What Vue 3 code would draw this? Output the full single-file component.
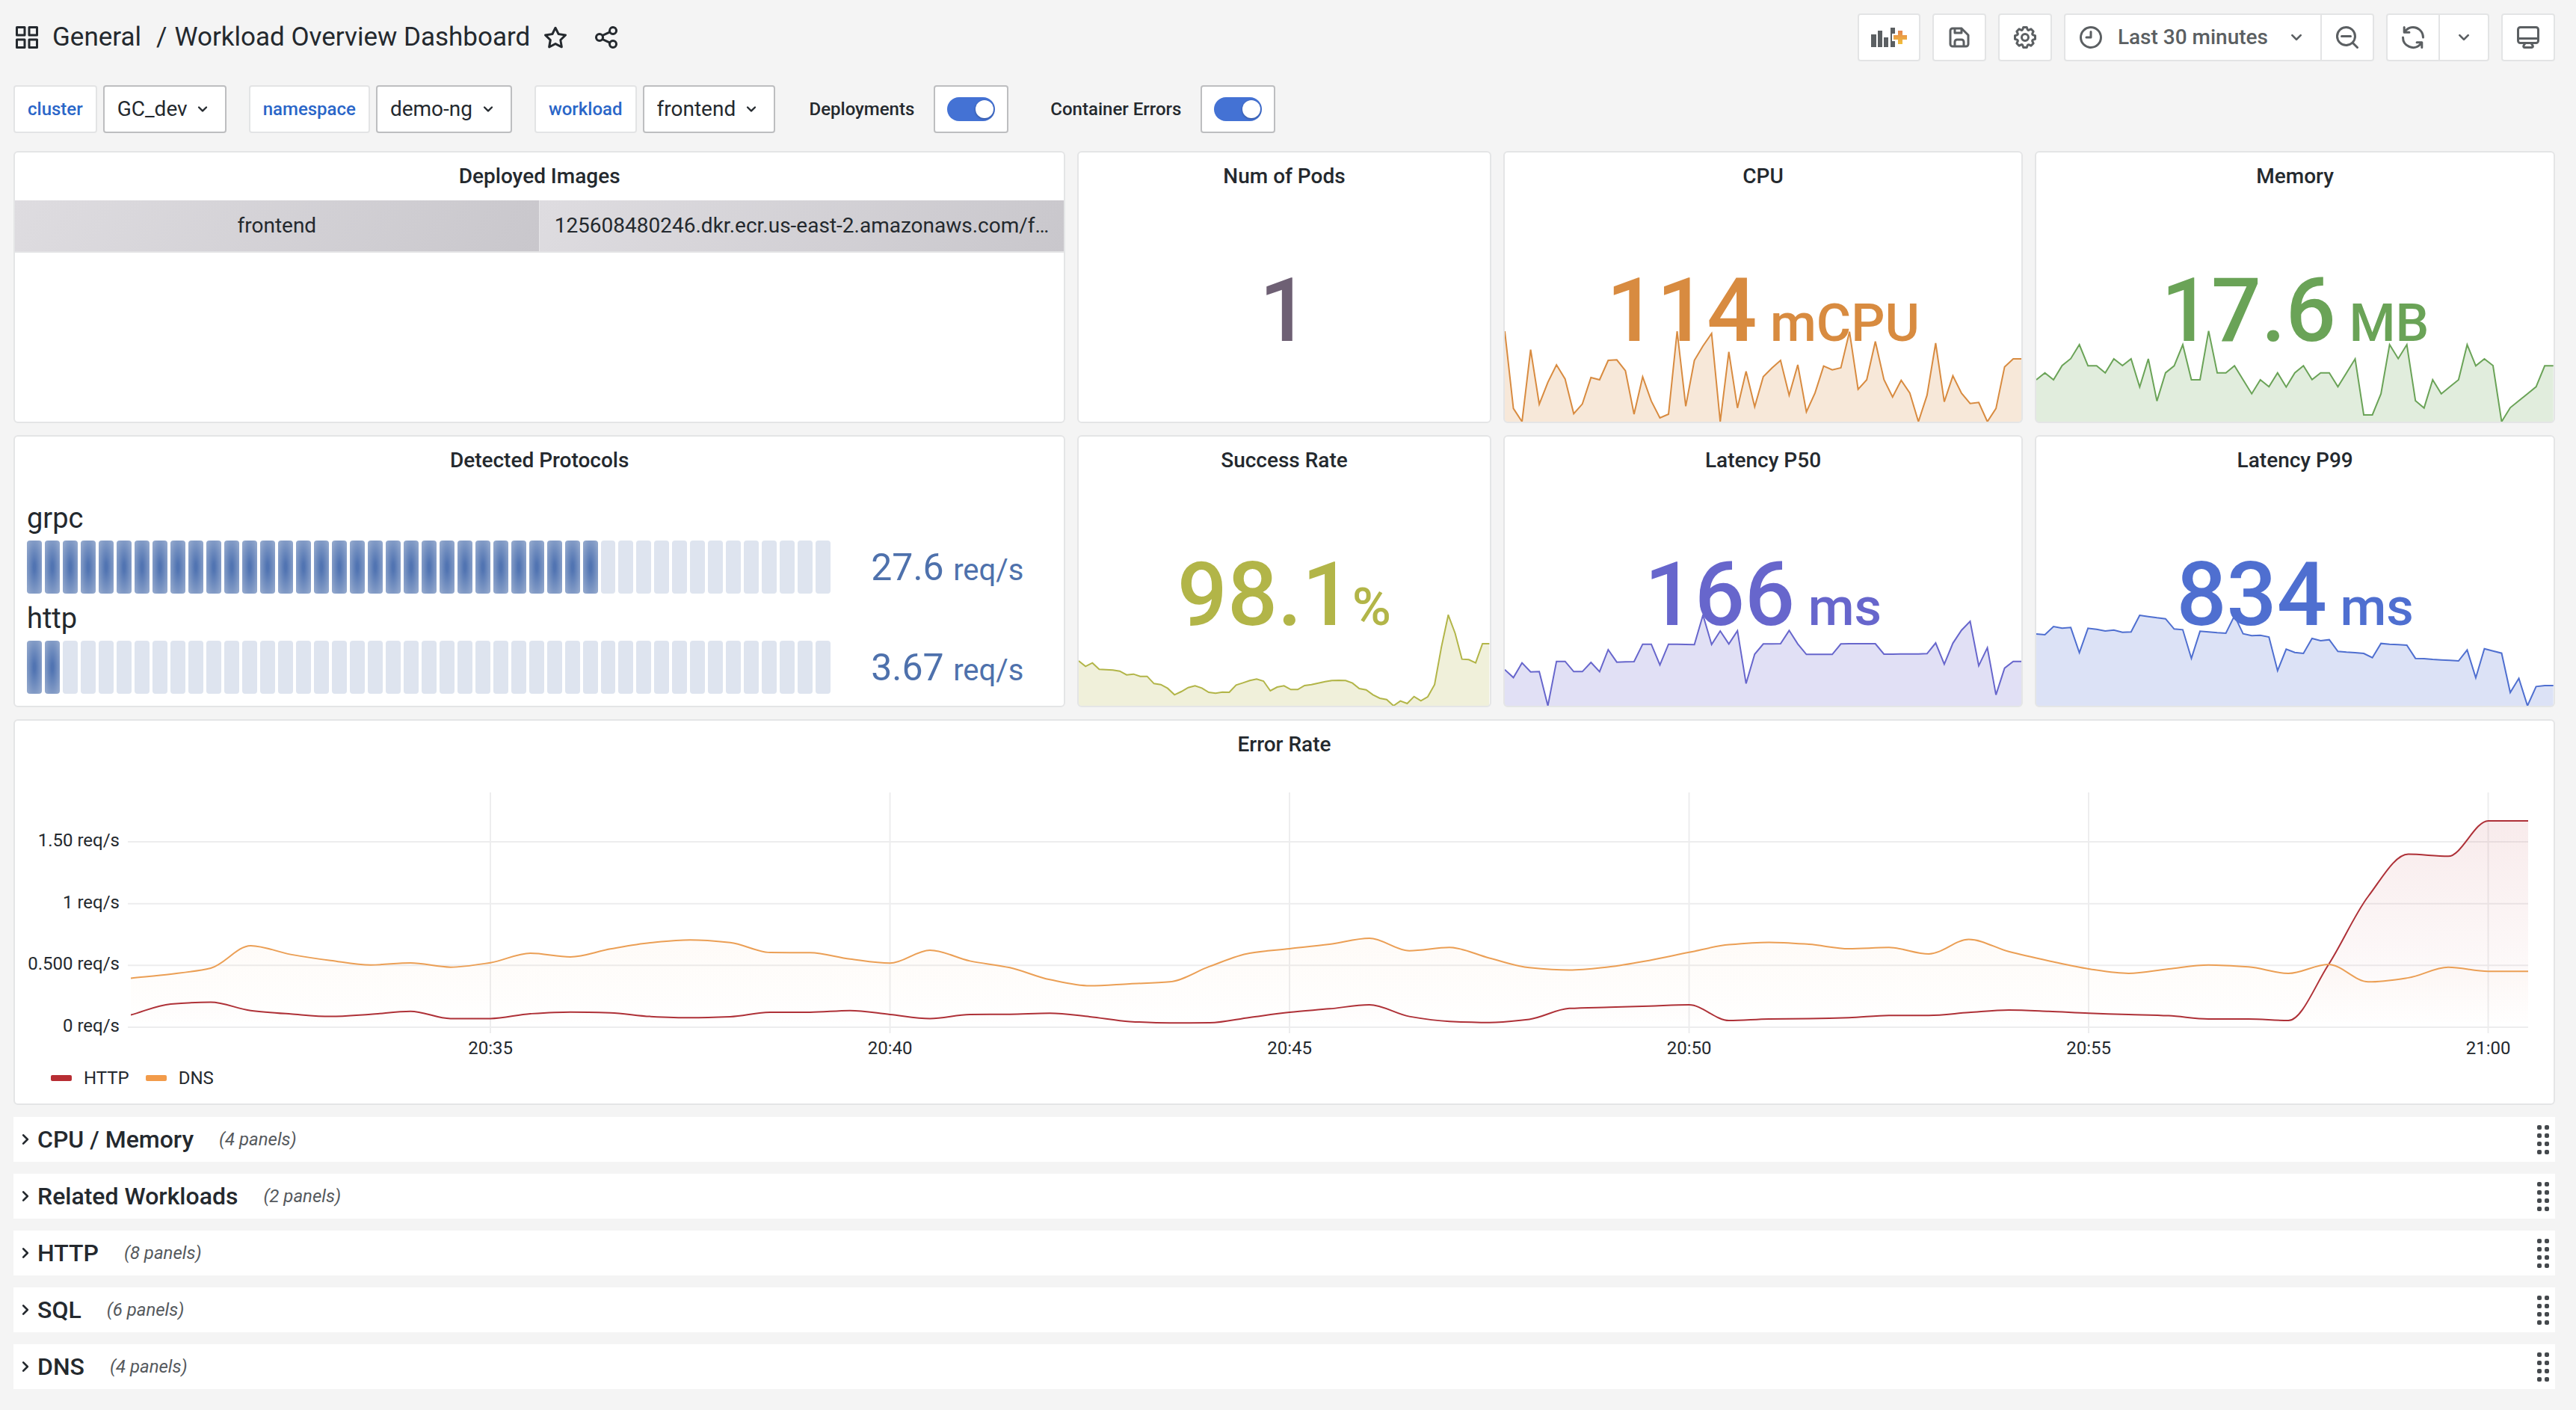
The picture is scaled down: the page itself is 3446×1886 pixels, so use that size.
<script setup>
import { ref } from 'vue'

const icons = {
  apps: 'M10,13H3a1,1,0,0,0-1,1v7a1,1,0,0,0,1,1h7a1,1,0,0,0,1-1V14A1,1,0,0,0,10,13ZM9,20H4V15H9ZM21,2H14a1,1,0,0,0-1,1v7a1,1,0,0,0,1,1h7a1,1,0,0,0,1-1V3A1,1,0,0,0,21,2ZM20,9H15V4h5Zm1,4H14a1,1,0,0,0-1,1v7a1,1,0,0,0,1,1h7a1,1,0,0,0,1-1V14A1,1,0,0,0,21,13Zm-1,7H15V15h5ZM10,2H3A1,1,0,0,0,2,3v7a1,1,0,0,0,1,1h7a1,1,0,0,0,1-1V3A1,1,0,0,0,10,2ZM9,9H4V4H9Z',
  star: 'M22,9.67A1,1,0,0,0,21.14,9l-5.69-.83L12.9,3a1,1,0,0,0-1.8,0L8.55,8.16,2.86,9a1,1,0,0,0-.81.68,1,1,0,0,0,.25,1l4.13,4-1,5.68A1,1,0,0,0,6.9,21.44L12,18.77l5.1,2.67a.93.93,0,0,0,.46.12,1,1,0,0,0,.59-.19,1,1,0,0,0,.4-1l-1-5.68,4.13-4A1,1,0,0,0,22,9.67Zm-6.15,4a1,1,0,0,0-.29.88l.72,4.2-3.76-2a1.06,1.06,0,0,0-.94,0l-3.76,2,.72-4.2a1,1,0,0,0-.29-.88l-3-3,4.21-.61a1,1,0,0,0,.76-.55L12,5.7l1.88,3.82a1,1,0,0,0,.76.55l4.21.61Z',
  share: 'M18,14a4,4,0,0,0-3.08,1.48l-5.1-2.35a3.64,3.64,0,0,0,0-2.26l5.1-2.35A4,4,0,1,0,14,6a4.17,4.17,0,0,0,.07.71L8.79,9.14a4,4,0,1,0,0,5.72l5.28,2.43A4.17,4.17,0,0,0,14,18a4,4,0,1,0,4-4ZM18,4a2,2,0,1,1-2,2A2,2,0,0,1,18,4ZM6,14a2,2,0,1,1,2-2A2,2,0,0,1,6,14Zm12,6a2,2,0,1,1,2-2A2,2,0,0,1,18,20Z',
  save: 'M20.71,9.29l-6-6a1,1,0,0,0-.32-.21A1.09,1.09,0,0,0,14,3H6A3,3,0,0,0,3,6V18a3,3,0,0,0,3,3H18a3,3,0,0,0,3-3V10A1,1,0,0,0,20.71,9.29ZM9,5h4V7H9Zm6,14H9V16a1,1,0,0,1,1-1h4a1,1,0,0,1,1,1Zm4-1a1,1,0,0,1-1,1H17V16a3,3,0,0,0-3-3H10a3,3,0,0,0-3,3v3H6a1,1,0,0,1-1-1V6A1,1,0,0,1,6,5H7V8A1,1,0,0,0,8,9h6a1,1,0,0,0,1-1V6.41l4,4Z',
  cog: 'M21.32,9.55l-1.89-.63.89-1.78A1,1,0,0,0,20.13,6L18,3.87a1,1,0,0,0-1.15-.19l-1.78.89-.63-1.89A1,1,0,0,0,13.5,2h-3a1,1,0,0,0-.95.68L8.92,4.57,7.14,3.68A1,1,0,0,0,6,3.87L3.87,6a1,1,0,0,0-.19,1.15l.89,1.78-1.89.63A1,1,0,0,0,2,10.5v3a1,1,0,0,0,.68.95l1.89.63-.89,1.78A1,1,0,0,0,3.87,18L6,20.13a1,1,0,0,0,1.15.19l1.78-.89.63,1.89a1,1,0,0,0,.95.68h3a1,1,0,0,0,.95-.68l.63-1.89,1.78.89A1,1,0,0,0,18,20.13L20.13,18a1,1,0,0,0,.19-1.15l-.89-1.78,1.89-.63A1,1,0,0,0,22,13.5v-3A1,1,0,0,0,21.32,9.55ZM20,12.78l-1.2.4A2,2,0,0,0,17.64,16l.57,1.14-1.1,1.1L16,17.64a2,2,0,0,0-2.79,1.16l-.4,1.2H11.22l-.4-1.2A2,2,0,0,0,8,17.64l-1.14.57-1.1-1.1L6.36,16A2,2,0,0,0,5.2,13.18L4,12.78V11.22l1.2-.4A2,2,0,0,0,6.36,8L5.79,6.89l1.1-1.1L8,6.36A2,2,0,0,0,10.82,5.2l.4-1.2h1.56l.4,1.2A2,2,0,0,0,16,6.36l1.14-.57,1.1,1.1L17.64,8a2,2,0,0,0,1.16,2.79l1.2.4ZM12,8a4,4,0,1,0,4,4A4,4,0,0,0,12,8Zm0,6a2,2,0,1,1,2-2A2,2,0,0,1,12,14Z',
  clock: 'M12,2A10,10,0,1,0,22,12,10,10,0,0,0,12,2Zm0,18a8,8,0,1,1,8-8A8,8,0,0,1,12,20ZM12,6a1,1,0,0,0-1,1v4H8a1,1,0,0,0,0,2h4a1,1,0,0,0,1-1V7A1,1,0,0,0,12,6Z',
  zoomOut: 'M21.71,20.29,18,16.61A9,9,0,1,0,16.61,18l3.68,3.68a1,1,0,0,0,1.42,0A1,1,0,0,0,21.71,20.29ZM11,18a7,7,0,1,1,7-7A7,7,0,0,1,11,18Zm4-8H7a1,1,0,0,0,0,2h8a1,1,0,0,0,0-2Z',
  sync: 'M19.91,15.51H15.38a1,1,0,0,0,0,2h2.4A8,8,0,0,1,4,12a1,1,0,1,0-2,0,10,10,0,0,0,16.88,7.23V21a1,1,0,0,0,2,0V16.5A1,1,0,0,0,19.91,15.51ZM12,2A10,10,0,0,0,5.12,4.77V3a1,1,0,0,0-2,0V7.5a1,1,0,0,0,1,1h4.5a1,1,0,0,0,0-2H6.22A8,8,0,0,1,20,12a1,1,0,0,0,2,0A10,10,0,0,0,12,2Z',
  monitor: 'M19,2H5A3,3,0,0,0,2,5V15a3,3,0,0,0,3,3H7.64l-.58,1a2,2,0,0,0,0,2,2,2,0,0,0,1.75,1h6.46A2,2,0,0,0,17,21a2,2,0,0,0,0-2l-.59-1H19a3,3,0,0,0,3-3V5A3,3,0,0,0,19,2ZM8.77,20,10,18H14l1.2,2ZM20,15a1,1,0,0,1-1,1H5a1,1,0,0,1-1-1V14H20Zm0-3H4V5A1,1,0,0,1,5,4H19a1,1,0,0,1,1,1Z',
  down: 'M17,9.17a1,1,0,0,0-1.41,0L12,12.71,8.46,9.17a1,1,0,0,0-1.41,0,1,1,0,0,0,0,1.42l4.24,4.24a1,1,0,0,0,1.42,0L17,10.59A1,1,0,0,0,17,9.17Z',
  right: 'M14.83,11.29,10.59,7.05a1,1,0,0,0-1.42,0,1,1,0,0,0,0,1.41L12.71,12,9.17,15.54a1,1,0,0,0,0,1.41,1,1,0,0,0,.71.29,1,1,0,0,0,.71-.29l4.24-4.24A1,1,0,0,0,14.83,11.29Z',
}

const variables = [
  { name: 'cluster', value: 'GC_dev' },
  { name: 'namespace', value: 'demo-ng' },
  { name: 'workload', value: 'frontend' },
]

const annotations = ref([
  { id: 'deployments', label: 'Deployments', on: true },
  { id: 'container-errors', label: 'Container Errors', on: true },
])

const SEGMENTS = 45
const protocols = [
  { name: 'grpc', value: '27.6', unit: 'req/s', lit: 32 },
  { name: 'http', value: '3.67', unit: 'req/s', lit: 2 },
]

// Spark points are depths below the top of the trend; `floor` is the lowest one.
const cpu = [128, 438, 491, 202, 421, 333, 263, 320, 459, 420, 314, 323, 245, 243, 287, 461, 311, 408, 476, 461, 128, 429, 245, 187, 137, 491, 211, 436, 289, 431, 310, 276, 245, 385, 263, 452, 376, 268, 283, 275, 130, 361, 323, 169, 322, 392, 325, 376, 491, 385, 176, 411, 307, 377, 418, 414, 491, 438, 271, 239, 239]
const memory = [323, 295, 323, 266, 238, 182, 267, 267, 295, 239, 266, 239, 352, 239, 408, 295, 267, 182, 323, 323, 127, 295, 295, 267, 323, 379, 323, 351, 295, 352, 295, 267, 322, 295, 295, 351, 295, 239, 464, 464, 379, 182, 238, 182, 407, 436, 323, 379, 351, 323, 182, 267, 239, 266, 491, 435, 407, 379, 351, 267, 267]
const success = [311, 333, 319, 345, 346, 348, 352, 367, 364, 373, 373, 402, 406, 421, 447, 434, 418, 411, 420, 437, 441, 436, 437, 408, 399, 390, 384, 392, 431, 416, 411, 426, 426, 410, 406, 400, 394, 390, 389, 390, 400, 422, 427, 447, 461, 466, 491, 472, 482, 454, 471, 455, 406, 255, 127, 200, 304, 306, 319, 242, 242]
const p50 = [346, 378, 319, 355, 354, 491, 313, 313, 354, 354, 317, 354, 266, 316, 315, 314, 244, 244, 327, 244, 244, 245, 246, 127, 245, 191, 243, 190, 402, 284, 243, 243, 242, 189, 243, 285, 285, 285, 285, 243, 242, 242, 242, 242, 284, 284, 283, 283, 283, 282, 239, 324, 240, 188, 152, 330, 258, 447, 340, 313, 313]
const p99 = [323, 326, 293, 300, 297, 398, 300, 304, 311, 307, 316, 315, 248, 253, 258, 262, 303, 306, 421, 312, 315, 318, 320, 250, 322, 330, 328, 335, 470, 384, 397, 401, 341, 350, 346, 393, 396, 398, 401, 418, 361, 364, 366, 368, 421, 422, 425, 427, 429, 431, 387, 499, 382, 391, 400, 558, 501, 611, 534, 530, 530]

const SPARK_RANGE = 366
function spark(points, floor) {
  return points.map((p, i) => `${i},${SPARK_RANGE - (floor - p)}`).join(' ')
}

const topStats = [
  { title: 'Num of Pods', value: '1', unit: '', tone: 'plum', span: 4 },
  { title: 'CPU', value: '114', unit: ' mCPU', tone: 'orange', span: 5, line: spark(cpu, 491) },
  { title: 'Memory', value: '17.6', unit: ' MB', tone: 'green', span: 5, line: spark(memory, 491) },
]
const bottomStats = [
  { title: 'Success Rate', value: '98.1', unit: '%', tone: 'olive', span: 4, line: spark(success, 491) },
  { title: 'Latency P50', value: '166', unit: ' ms', tone: 'violet', span: 5, line: spark(p50, 491) },
  { title: 'Latency P99', value: '834', unit: ' ms', tone: 'blue', span: 5, line: spark(p99, 611) },
]

const dns = [0.397, 0.43, 0.478, 0.66, 0.589, 0.54, 0.504, 0.52, 0.486, 0.522, 0.599, 0.569, 0.633, 0.683, 0.706, 0.685, 0.605, 0.603, 0.552, 0.518, 0.623, 0.536, 0.482, 0.385, 0.335, 0.351, 0.367, 0.492, 0.599, 0.635, 0.671, 0.72, 0.619, 0.645, 0.56, 0.482, 0.462, 0.488, 0.54, 0.606, 0.668, 0.687, 0.671, 0.635, 0.645, 0.593, 0.71, 0.612, 0.537, 0.472, 0.436, 0.472, 0.504, 0.488, 0.436, 0.508, 0.367, 0.4, 0.485, 0.452, 0.452]
const http = [0.099, 0.188, 0.202, 0.135, 0.107, 0.087, 0.105, 0.129, 0.07, 0.07, 0.109, 0.123, 0.117, 0.087, 0.077, 0.085, 0.121, 0.121, 0.135, 0.103, 0.07, 0.103, 0.105, 0.113, 0.085, 0.046, 0.035, 0.036, 0.079, 0.121, 0.149, 0.181, 0.087, 0.047, 0.038, 0.064, 0.152, 0.162, 0.171, 0.181, 0.054, 0.067, 0.07, 0.077, 0.096, 0.096, 0.119, 0.139, 0.129, 0.113, 0.103, 0.093, 0.067, 0.067, 0.054, 0.505, 1.06, 1.4, 1.383, 1.67, 1.67]

const PLOT = 314
const yOf = (v) => PLOT - (v * 496) / 3

// Monotone cubic interpolation, so the curve never overshoots its points.
function smooth(values) {
  const y = values.map(yOf)
  const n = y.length
  const d = y.slice(1).map((v, i) => v - y[i])
  const m = y.map((_, i) => {
    if (i === 0) return d[0]
    if (i === n - 1) return d[n - 2]
    const a = d[i - 1]
    const b = d[i]
    return a * b <= 0 ? 0 : (2 * a * b) / (a + b)
  })
  let path = `M0,${y[0].toFixed(1)}`
  for (let i = 0; i < n - 1; i++) {
    const c1 = (y[i] + m[i] / 3).toFixed(2)
    const c2 = (y[i + 1] - m[i + 1] / 3).toFixed(2)
    path += `C${(i + 1 / 3).toFixed(3)},${c1} ${(i + 2 / 3).toFixed(3)},${c2} ${i + 1},${y[i + 1].toFixed(2)}`
  }
  return path
}

const series = [
  { name: 'HTTP', key: 'http', d: smooth(http) },
  { name: 'DNS', key: 'dns', d: smooth(dns) },
]
const yTicks = [
  { v: 1.5, label: '1.50 req/s' },
  { v: 1, label: '1 req/s' },
  { v: 0.5, label: '0.500 req/s' },
  { v: 0, label: '0 req/s' },
]
const xTicks = ['20:35', '20:40', '20:45', '20:50', '20:55', '21:00'].map((label, i) => ({
  label,
  x: `${((9 + i * 10) * 100) / 60}%`,
}))

const rows = [
  { title: 'CPU / Memory', count: 4 },
  { title: 'Related Workloads', count: 2 },
  { title: 'HTTP', count: 8 },
  { title: 'SQL', count: 6 },
  { title: 'DNS', count: 4 },
]
</script>

<template>
  <div class="page">
    <header class="toolbar">
      <svg class="icon lg" viewBox="0 0 24 24" aria-hidden="true"><path :d="icons.apps" /></svg>
      <h1 class="crumbs">
        <a href="#general">General</a>
        <span class="slash">/</span>
        <a href="#dashboard">Workload Overview Dashboard</a>
      </h1>
      <button class="bare" type="button" aria-label="Mark as favorite">
        <svg class="icon lg" viewBox="0 0 24 24"><path :d="icons.star" /></svg>
      </button>
      <button class="bare" type="button" aria-label="Share dashboard">
        <svg class="icon lg" viewBox="0 0 24 24"><path :d="icons.share" /></svg>
      </button>

      <div class="actions">
        <button class="btn add" type="button" aria-label="Add panel">
          <svg class="add-icon" viewBox="0 0 48 26">
            <defs>
              <linearGradient id="plus" x1="0" y1="0" x2="0" y2="1">
                <stop offset="0" stop-color="#e5854f" />
                <stop offset="1" stop-color="#f2c03a" />
              </linearGradient>
            </defs>
            <path class="bars" d="M0,9h7v17H0ZM9,4h6v22H9ZM17,13h6v13H17ZM26,0h6v8h-4v10h4v8H26Z" />
            <path fill="url(#plus)" d="M36,4h6v6h6v6h-6v6h-6v-6h-6v-6h6Z" />
          </svg>
        </button>
        <button class="btn" type="button" aria-label="Save dashboard">
          <svg class="icon lg" viewBox="0 0 24 24"><path :d="icons.save" /></svg>
        </button>
        <button class="btn" type="button" aria-label="Dashboard settings">
          <svg class="icon lg" viewBox="0 0 24 24"><path :d="icons.cog" /></svg>
        </button>
        <div class="group">
          <button class="btn time" type="button">
            <svg class="icon lg" viewBox="0 0 24 24"><path :d="icons.clock" /></svg>
            <span>Last 30 minutes</span>
            <svg class="icon md caret" viewBox="0 0 24 24"><path :d="icons.down" /></svg>
          </button>
          <button class="btn" type="button" aria-label="Zoom out time range">
            <svg class="icon lg" viewBox="0 0 24 24"><path :d="icons.zoomOut" /></svg>
          </button>
        </div>
        <div class="group">
          <button class="btn" type="button" aria-label="Refresh dashboard">
            <svg class="icon lg" viewBox="0 0 24 24"><path :d="icons.sync" /></svg>
          </button>
          <button class="btn" type="button" aria-label="Refresh interval">
            <svg class="icon md" viewBox="0 0 24 24"><path :d="icons.down" /></svg>
          </button>
        </div>
        <button class="btn" type="button" aria-label="Cycle view mode">
          <svg class="icon lg" viewBox="0 0 24 24"><path :d="icons.monitor" /></svg>
        </button>
      </div>
    </header>

    <div class="submenu">
      <div v-for="v in variables" :key="v.name" class="variable">
        <label :for="'var-' + v.name">{{ v.name }}</label>
        <div class="picker">
          <select :id="'var-' + v.name">
            <option>{{ v.value }}</option>
          </select>
          <svg class="icon sm" viewBox="0 0 24 24" aria-hidden="true"><path :d="icons.down" /></svg>
        </div>
      </div>
      <div v-for="a in annotations" :key="a.id" class="annotation">
        <label :for="a.id">{{ a.label }}</label>
        <div class="switch">
          <input :id="a.id" v-model="a.on" type="checkbox" />
        </div>
      </div>
    </div>

    <main class="grid">
      <section class="panel span-10">
        <h2>Deployed Images</h2>
        <table>
          <tbody>
            <tr>
              <td>frontend</td>
              <td>125608480246.dkr.ecr.us-east-2.amazonaws.com/f…</td>
            </tr>
          </tbody>
        </table>
      </section>

      <section v-for="s in topStats" :key="s.title" class="panel" :class="['span-' + s.span, s.tone]">
        <h2>{{ s.title }}</h2>
        <div class="stat">
          <svg v-if="s.line" class="spark" viewBox="0 0 60 366" preserveAspectRatio="none" aria-hidden="true">
            <polygon :points="'0,366 ' + s.line + ' 60,366'" />
            <polyline :points="s.line" />
          </svg>
          <p class="figure">{{ s.value }}<span class="unit">{{ s.unit }}</span></p>
        </div>
      </section>

      <section class="panel span-10">
        <h2>Detected Protocols</h2>
        <div class="gauges">
          <div v-for="p in protocols" :key="p.name" class="gauge">
            <p class="gauge-name">{{ p.name }}</p>
            <div class="gauge-row">
              <div class="cells">
                <i v-for="n in SEGMENTS" :key="n" :class="{ lit: n <= p.lit }"></i>
              </div>
              <p class="gauge-value">{{ p.value }} <span>{{ p.unit }}</span></p>
            </div>
          </div>
        </div>
      </section>

      <section v-for="s in bottomStats" :key="s.title" class="panel" :class="['span-' + s.span, s.tone]">
        <h2>{{ s.title }}</h2>
        <div class="stat">
          <svg class="spark" viewBox="0 0 60 366" preserveAspectRatio="none" aria-hidden="true">
            <polygon :points="'0,366 ' + s.line + ' 60,366'" />
            <polyline :points="s.line" />
          </svg>
          <p class="figure">{{ s.value }}<span class="unit">{{ s.unit }}</span></p>
        </div>
      </section>

      <section class="panel wide">
        <h2>Error Rate</h2>
        <div class="plot">
          <svg class="chart" role="img" aria-label="Error rate over time">
            <defs>
              <linearGradient
                v-for="s in series"
                :id="'fill-' + s.key"
                :key="s.key"
                gradientUnits="userSpaceOnUse"
                x1="0"
                y1="0"
                x2="0"
                y2="314"
              >
                <stop offset="0" :class="'stop-' + s.key" stop-opacity="0.11" />
                <stop offset="1" :class="'stop-' + s.key" stop-opacity="0" />
              </linearGradient>
            </defs>
            <g class="gridlines">
              <line v-for="t in yTicks" :key="t.label" x1="-4" x2="100%" :y1="yOf(t.v)" :y2="yOf(t.v)" />
              <line v-for="t in xTicks" :key="t.label" :x1="t.x" :x2="t.x" y1="0" y2="322" />
            </g>
            <svg width="100%" height="314" viewBox="0 0 60 314" preserveAspectRatio="none">
              <g v-for="s in series" :key="s.key">
                <path :d="s.d + 'V314H0Z'" :fill="'url(#fill-' + s.key + ')'" />
                <path class="line" :class="'line-' + s.key" :d="s.d" />
              </g>
            </svg>
            <text v-for="t in yTicks" :key="t.label" x="-15" :y="yOf(t.v) + 6" text-anchor="end">{{ t.label }}</text>
            <text v-for="t in xTicks" :key="t.label" :x="t.x" y="350" text-anchor="middle">{{ t.label }}</text>
          </svg>
        </div>
        <ul class="legend">
          <li v-for="s in series" :key="s.key"><i :class="'swatch-' + s.key"></i>{{ s.name }}</li>
        </ul>
      </section>

      <section v-for="r in rows" :key="r.title" class="row">
        <button type="button" class="row-toggle">
          <svg class="icon md" viewBox="0 0 24 24" aria-hidden="true"><path :d="icons.right" /></svg>
          <span class="row-title">{{ r.title }}</span>
          <span class="row-count">({{ r.count }} panels)</span>
        </button>
        <svg class="handle" viewBox="0 0 16 40" aria-hidden="true">
          <g v-for="n in 4" :key="n">
            <rect x="0" :y="(n - 1) * 11 + 1" width="6" height="6" rx="2" />
            <rect x="10" :y="(n - 1) * 11 + 1" width="6" height="6" rx="2" />
          </g>
        </svg>
      </section>
    </main>
  </div>
</template>

<style>
html,
body {
  margin: 0;
  background: #f4f4f4;
}
</style>

<style scoped>
.page {
  box-sizing: border-box;
  min-height: 100vh;
  padding: 18px 28px 28px 18px;
  background: #f4f4f4;
  color: #24292e;
  font-family: Roboto, "Liberation Sans", sans-serif;
  font-size: 28px;
  line-height: 44px;
}
.page *,
.page *::before {
  box-sizing: border-box;
}
h1,
h2,
p,
ul {
  margin: 0;
  padding: 0;
  font-weight: 400;
}
button,
select,
input {
  margin: 0;
  font: inherit;
  color: inherit;
}
a {
  color: inherit;
  text-decoration: none;
}
.icon {
  display: block;
  flex: none;
  fill: currentColor;
}
.sm {
  width: 28px;
  height: 28px;
}
.md {
  width: 32px;
  height: 32px;
}
.lg {
  width: 36px;
  height: 36px;
}

/* Toolbar */
.toolbar {
  display: flex;
  align-items: center;
  height: 64px;
}
.crumbs {
  display: flex;
  margin-left: 16px;
  font-size: 35px;
  white-space: nowrap;
}
.slash {
  margin: 0 10px 0 20px;
}
.bare {
  padding: 0;
  border: 0;
  background: none;
  margin-left: 16px;
}
.bare + .bare {
  margin-left: 32px;
}
.actions {
  display: flex;
  gap: 16px;
  margin-left: auto;
  color: #5b5f62;
}
.group {
  display: flex;
}
.btn {
  display: flex;
  align-items: center;
  height: 64px;
  padding: 0 16px;
  border: 2px solid #e3e4e5;
  border-radius: 4px;
  background: #fff;
  font-weight: 500;
  white-space: nowrap;
}
.group .btn:first-child {
  border-radius: 4px 0 0 4px;
}
.group .btn:last-child {
  border-left: 0;
  border-radius: 0 4px 4px 0;
}
.time .icon:first-child {
  margin-right: 18px;
}
.caret {
  margin-left: 22px;
}
.add-icon {
  width: 48px;
  height: 26px;
}
.bars {
  fill: #5b5f62;
}

/* Variables and annotation switches */
.submenu {
  display: flex;
  flex-wrap: wrap;
  gap: 30px;
  margin: 32px 0 24px;
}
.variable,
.annotation {
  display: flex;
  align-items: center;
  gap: 8px;
}
.variable label,
.annotation label {
  font-size: 24px;
  font-weight: 500;
}
.variable label {
  display: flex;
  align-items: center;
  height: 64px;
  padding: 0 17px;
  border: 2px solid #e3e4e5;
  border-radius: 4px;
  background: #fff;
  color: #2a66c8;
}
.picker {
  display: grid;
  align-items: center;
}
.picker > * {
  grid-area: 1 / 1;
}
.picker .icon {
  justify-self: end;
  margin-right: 18px;
  pointer-events: none;
}
.picker select {
  height: 64px;
  padding: 0 50px 0 17px;
  border: 2px solid #bdbec0;
  border-radius: 4px;
  background: #fff;
  appearance: none;
}
.annotation {
  gap: 26px;
  margin-left: 16px;
}
.annotation + .annotation {
  margin-left: 26px;
}
.switch {
  display: grid;
  place-items: center;
  width: 100px;
  height: 64px;
  border: 2px solid #bdbec0;
  border-radius: 4px;
  background: #fff;
}
.switch input {
  display: flex;
  align-items: center;
  width: 64px;
  height: 32px;
  padding: 0 2px;
  border-radius: 16px;
  background: #a9abae;
  appearance: none;
}
.switch input::before {
  content: "";
  width: 24px;
  height: 24px;
  border-radius: 50%;
  background: #fff;
  box-shadow: 0 1px 3px rgba(0, 0, 0, 0.3);
}
.switch input:checked {
  justify-content: flex-end;
  background: #4472d4;
}

/* Panel grid */
.grid {
  display: grid;
  grid-template-columns: repeat(24, minmax(0, 1fr));
  grid-auto-rows: 60px;
  gap: 16px;
}
.panel {
  display: flex;
  flex-direction: column;
  grid-row: span 5;
  border: 2px solid #e4e5e6;
  border-radius: 6px;
  background: #fff;
  overflow: hidden;
}
.span-10 {
  grid-column: span 10;
}
.span-5 {
  grid-column: span 5;
}
.span-4 {
  grid-column: span 4;
}
.wide {
  grid-column: 1 / -1;
  grid-row: span 7;
}
.panel h2 {
  flex: none;
  font-size: 28px;
  font-weight: 500;
  line-height: 64px;
  text-align: center;
}

/* Table */
table {
  width: 100%;
  table-layout: fixed;
  border-collapse: separate;
  border-spacing: 0;
}
td {
  height: 70px;
  padding: 0 12px;
  border-bottom: 2px solid #e3e3e5;
  background: linear-gradient(120deg, #dedce0, #c9c7cc) padding-box;
  text-align: center;
  white-space: nowrap;
  overflow: hidden;
  text-overflow: ellipsis;
}
td:first-child {
  border-right: 1px solid #e6e5e8;
}

/* Stats */
.stat {
  position: relative;
  display: grid;
  flex: 1;
  place-items: center;
}
.spark {
  position: absolute;
  bottom: 0;
  left: 0;
  width: 100%;
  height: 122px;
}
.spark polygon {
  fill: currentColor;
  opacity: 0.2;
}
.spark polyline {
  fill: none;
  stroke: currentColor;
  stroke-width: 2;
  vector-effect: non-scaling-stroke;
}
.figure {
  position: relative;
  font-size: 118px;
  font-weight: 500;
  line-height: 1;
  white-space: pre;
}
.unit {
  font-size: 71px;
}
.plum .stat {
  color: #6e6074;
}
.orange .stat {
  color: #d88b40;
}
.green .stat {
  color: #6aa357;
}
.olive .stat {
  color: #b2b548;
}
.violet .stat {
  color: #6766cc;
}
.blue .stat {
  color: #4f6fd0;
}

/* Bar gauge */
.gauges {
  display: flex;
  flex: 1;
  flex-direction: column;
  justify-content: flex-end;
  gap: 11px;
  padding: 16px;
}
.gauge-name {
  margin-bottom: 8px;
  font-size: 38px;
}
.gauge-row {
  display: grid;
  grid-template-columns: minmax(0, 1fr) 280px;
  gap: 16px;
  align-items: center;
  height: 71px;
}
.cells {
  display: flex;
  gap: 4px;
  height: 71px;
}
.cells i {
  flex: 1;
  border-radius: 4px;
  background: #dee4ef;
}
.cells .lit {
  background: radial-gradient(#5174b2 10%, #8fa5cb 85%);
}
.gauge-value {
  color: #4e71ac;
  font-size: 50px;
  line-height: 1;
  text-align: center;
  white-space: nowrap;
}
.gauge-value span {
  font-size: 40px;
}

/* Time series */
.plot {
  margin: 32px 34px 0 155px;
}
.chart {
  display: block;
  width: 100%;
  height: 360px;
  overflow: visible;
}
.chart text {
  fill: #24292e;
  font-size: 24px;
}
.gridlines line {
  stroke: #ededee;
  stroke-width: 2;
}
.line {
  fill: none;
  stroke-width: 2;
  vector-effect: non-scaling-stroke;
}
.line-http {
  stroke: #ae3037;
}
.line-dns {
  stroke: #eb9f55;
}
.stop-http {
  stop-color: #b72d33;
}
.stop-dns {
  stop-color: #f29b4a;
}
.legend {
  display: flex;
  gap: 22px;
  margin: 8px 0 0 48px;
  font-size: 24px;
  line-height: 28px;
  list-style: none;
}
.legend li {
  display: flex;
  align-items: center;
  gap: 16px;
}
.legend i {
  width: 28px;
  height: 8px;
  border-radius: 2px;
}
.swatch-http {
  background: #b72d33;
}
.swatch-dns {
  background: #f29b4a;
}

/* Collapsed rows */
.row {
  display: flex;
  grid-column: 1 / -1;
  align-items: center;
  background: #fff;
}
.row-toggle {
  display: flex;
  flex: 1;
  align-items: center;
  padding: 0;
  border: 0;
  background: none;
}
.row-title {
  font-size: 32px;
  font-weight: 500;
}
.row-count {
  margin-left: 34px;
  color: #55595d;
  font-size: 24px;
  font-style: italic;
}
.handle {
  width: 16px;
  height: 40px;
  margin-right: 8px;
  fill: #44484c;
}
</style>
